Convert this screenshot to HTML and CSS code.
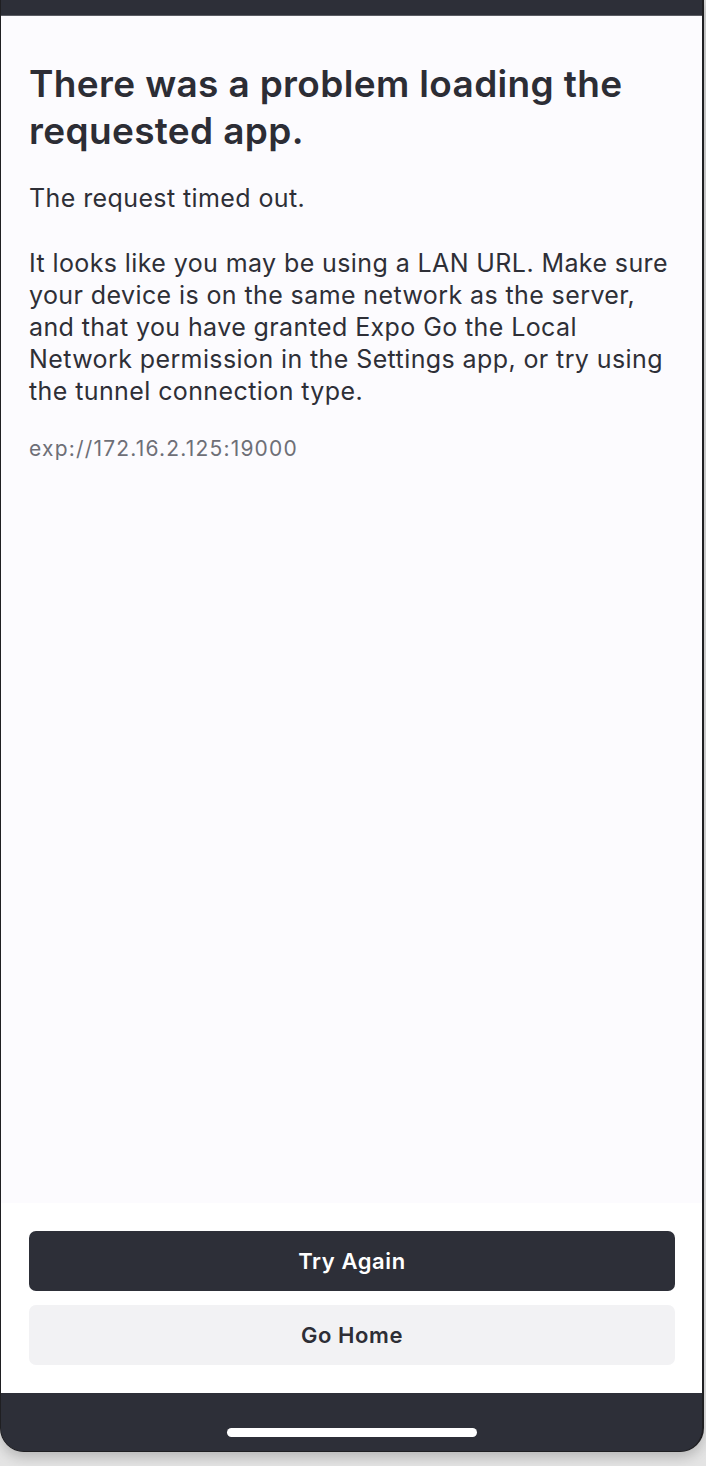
FILE: index.html
```html
<!DOCTYPE html>
<html lang="en">
<head>
<meta charset="utf-8">
<title>Expo Go - Error</title>
<link rel="stylesheet" href="styles.css">
</head>
<body>
<div class="phone">
  <div class="status-bar"></div>
  <main class="content">
    <h1 class="title">There was a problem loading the<br>requested app.</h1>
    <p class="message">The request timed out.</p>
    <p class="message">It looks like you may be using a LAN URL. Make sure<br>your device is on the same network as the server,<br>and that you have granted Expo Go the Local<br>Network permission in the Settings app, or try using<br>the tunnel connection type.</p>
    <p class="url">exp://172.16.2.125:19000</p>
  </main>
  <div class="actions">
    <button class="btn btn-primary">Try Again</button>
    <button class="btn btn-secondary">Go Home</button>
  </div>
  <div class="home-bar"><span class="home-indicator"></span></div>
</div>
</body>
</html>
```
FILE: styles.css
```css
html, body {
  margin: 0;
  padding: 0;
}
body {
  width: 706px;
  height: 1466px;
  background: linear-gradient(#d4d4d4, #e4e4e4);
  font-family: Inter, "Noto Sans", sans-serif;
  overflow: hidden;
}
.phone {
  box-sizing: border-box;
  width: 704px;
  height: 1452px;
  display: flex;
  flex-direction: column;
  border-left: 1px solid #1f1f22;
  border-right: 2px solid #1f1f22;
  border-bottom: 1px solid #1f1f22;
  border-radius: 0 0 24px 24px;
  overflow: hidden;
  background: #2d2f38;
  box-shadow: 0 6px 12px rgba(0,0,0,0.18);
}
.status-bar {
  height: 15px;
  flex: none;
  background: #2d2f38;
  border-bottom: 1px solid #5a5c63;
}
.content {
  flex: 1;
  background: #fcfbfe;
  padding: 44px 28px 0 28px;
}
.title {
  margin: 0;
  font-size: 37px;
  line-height: 47px;
  font-weight: 600;
  color: #2c2d35;
  letter-spacing: 0.35px;
}
.message {
  margin: 28px 0 0;
  font-size: 25px;
  line-height: 32px;
  font-weight: 400;
  color: #2e2f37;
  letter-spacing: 0.4px;
}
.message + .message {
  margin-top: 33px;
}
.url {
  margin: 28px 0 0;
  font-size: 21px;
  line-height: 28px;
  color: #6e6f77;
  letter-spacing: 1.2px;
}
.actions {
  flex: none;
  background: #ffffff;
  padding: 28px 27px 28px 28px;
  display: flex;
  flex-direction: column;
  gap: 14px;
}
.btn {
  height: 60px;
  border: none;
  border-radius: 7px;
  font-family: Inter, "Noto Sans", sans-serif;
  font-size: 22px;
  font-weight: 600;
  letter-spacing: 0.6px;
}
.btn-primary {
  background: #2d2f38;
  color: #ffffff;
}
.btn-secondary {
  background: #f2f2f4;
  color: #2d2e36;
}
.home-bar {
  height: 58px;
  flex: none;
  background: #2d2f38;
  display: flex;
  justify-content: center;
  padding-top: 35px;
  box-sizing: border-box;
}
.home-indicator {
  display: block;
  width: 250px;
  height: 9px;
  border-radius: 5px;
  background: #ffffff;
}
```
